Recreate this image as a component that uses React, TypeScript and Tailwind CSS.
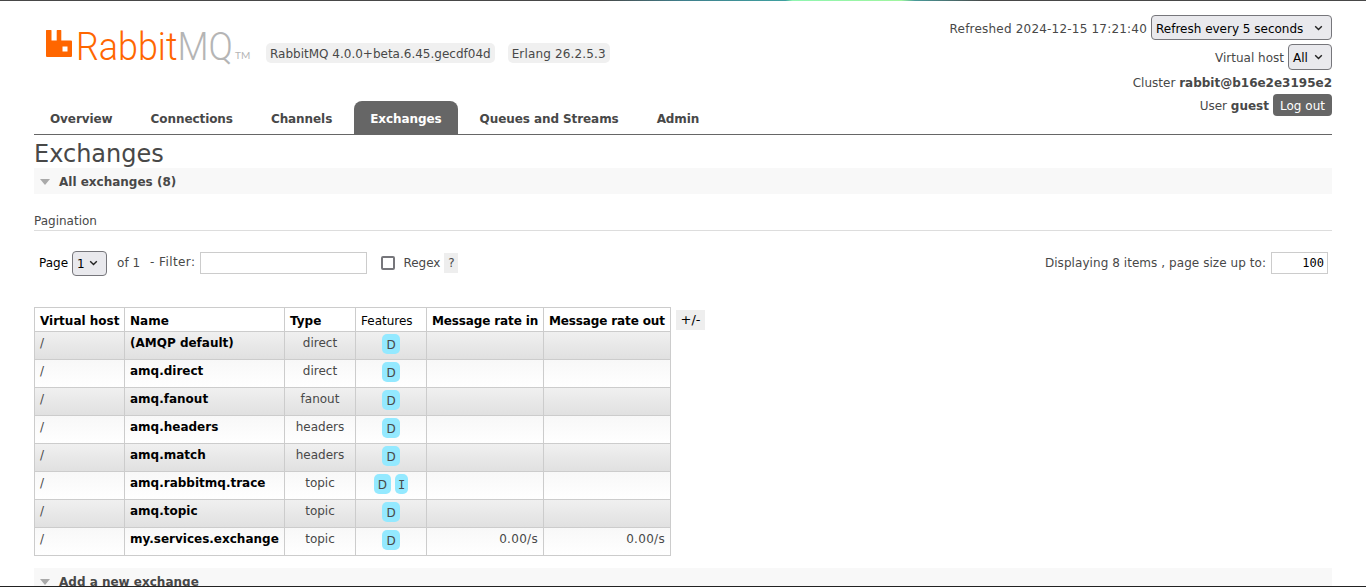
import React from "react";

const tabs = ["Overview", "Connections", "Channels", "Exchanges", "Queues and Streams", "Admin"];

const rows = [
  { name: "(AMQP default)", type: "direct", features: ["D"] },
  { name: "amq.direct", type: "direct", features: ["D"] },
  { name: "amq.fanout", type: "fanout", features: ["D"] },
  { name: "amq.headers", type: "headers", features: ["D"] },
  { name: "amq.match", type: "headers", features: ["D"] },
  { name: "amq.rabbitmq.trace", type: "topic", features: ["D", "I"] },
  { name: "amq.topic", type: "topic", features: ["D"] },
  { name: "my.services.exchange", type: "topic", features: ["D"], rateIn: "0.00/s", rateOut: "0.00/s" },
];

const Chevron = () => (
  <svg width="9" height="6" viewBox="0 0 9 6" className="absolute right-[8px] top-1/2 -translate-y-1/2">
    <path d="M1.2 1.2 L4.5 4.5 L7.8 1.2" fill="none" stroke="#222" strokeWidth="1.4" />
  </svg>
);

const Select = ({ label, className }: { label: string; className: string }) => (
  <div className={`relative rounded-[4px] border border-[#76767b] bg-[#e9e9ed] pl-[4px] text-[12px] text-black ${className}`}>
    {label}
    <Chevron />
  </div>
);

const Logo = () => (
  <div className="flex items-start w-[208px] h-[36px]">
    <svg width="26" height="27" viewBox="0 0 26 27" className="mt-[1px] shrink-0">
      <path
        fillRule="evenodd"
        fill="#ff6600"
        d="M0 0.5 Q0 0 0.5 0 H5 Q5.5 0 5.5 0.5 V10.5 H10.7 V0.5 Q10.7 0 11.2 0 H14.8 Q15.3 0 15.3 0.5 V10.5 H25 Q26 10.5 26 11.5 V26 Q26 27 25 27 H1 Q0 27 0 26 Z M16.5 16.5 V21.5 H21.5 V16.5 Z"
      />
    </svg>
    <div className="w-[155px] ml-[4px] shrink-0">
      <span className="font-['Roboto',sans-serif] font-light text-[39px] leading-[36px] inline-block origin-left scale-x-[0.92] whitespace-nowrap">
        <span className="text-[#ff6600]">Rabbit</span>
        <span className="text-[#b5b5b5]">MQ</span>
      </span>
    </div>
    <span className="ml-[4px] mt-[22px] text-[10px] leading-[9px] font-['Lato',sans-serif] text-[#b5b5b5]">TM</span>
  </div>
);

const Th = ({ children, plain, className = "" }: { children: React.ReactNode; plain?: boolean; className?: string }) => (
  <th className={`border border-[#cccccc] h-[24px] px-[5px] pt-[3px] align-middle text-left whitespace-nowrap text-black ${plain ? "font-normal" : "font-bold"} ${className}`}>
    {children}
  </th>
);

const Td = ({ children, className = "" }: { children?: React.ReactNode; className?: string }) => (
  <td className={`border border-[#cccccc] h-[28px] px-[5px] pb-[5px] align-middle whitespace-nowrap ${className}`}>{children}</td>
);

export default function App() {
  return (
    <div className="relative h-[587px] overflow-hidden bg-white font-['DejaVu_Sans',sans-serif] text-[12px] leading-[16px] text-[#484848]">
      <div className="h-px bg-[linear-gradient(90deg,#484848_0%,#484848_44%,#3f7f8c_50%,#3fa0a0_57.5%,#8ff5b0_58%,#9ff59f_66%,#4a9a9a_67%,#484848_72%,#484848_100%)]" />

      <div className="mx-[34px]">
        <div className="flex justify-between h-[100px]">
          <div className="flex items-start pt-[28px] pl-[12px]">
            <Logo />
            <div className="flex gap-[13px] ml-[12px] mt-[14px]">
              <span className="rounded-[5px] bg-[#f0f0f0] px-[4px] pt-[3px] pb-[1px] whitespace-nowrap">RabbitMQ 4.0.0+beta.6.45.gecdf04d</span>
              <span className="rounded-[5px] bg-[#f0f0f0] px-[4px] pt-[3px] pb-[1px] tracking-[0.15px] whitespace-nowrap">Erlang 26.2.5.3</span>
            </div>
          </div>
          <div className="flex flex-col items-end pt-[14px]">
            <div className="flex items-center gap-[4px] h-[25px]">
              <span className="tracking-[0.2px] pt-[2px]">Refreshed 2024-12-15 17:21:40</span>
              <Select label="Refresh every 5 seconds" className="w-[181px] h-[25px] leading-[27px]" />
            </div>
            <div className="flex items-center gap-[4px] h-[26px] mt-[4px]">
              <span className="pt-[2px]">Virtual host</span>
              <Select label="All" className="w-[44px] h-[26px] leading-[26px]" />
            </div>
            <div className="mt-[5px] h-[16px]">
              Cluster <b>rabbit@b16e2e3195e2</b>
            </div>
            <div className="flex items-center gap-[4px] mt-[3px] h-[22px]">
              <span className="pt-[2px]">
                User <b>guest</b>
              </span>
              <span className="rounded-[4px] bg-[#666666] w-[59px] text-center h-[22px] leading-[24px] text-white">Log out</span>
            </div>
          </div>
        </div>

        <div className="flex h-[34px] border-b border-[#666666] font-bold tracking-[-0.08px]">
          {tabs.map((t) => (
            <div
              key={t}
              className={`h-[33px] pt-[10px] rounded-t-[8px] px-[16px] mr-[6px] ${t === "Exchanges" ? "bg-[#666666] text-white" : "text-[#484848]"}`}
            >
              {t}
            </div>
          ))}
        </div>

        <h1 className="text-[24px] leading-[32px] mt-[3px] h-[30px] font-normal">Exchanges</h1>

        <div className="flex items-center h-[26px] pt-[1px] bg-[#f8f8f8] font-bold">
          <span className="ml-[6px] mr-[9px] w-0 h-0 border-x-[5.5px] border-x-transparent border-t-[6px] border-t-[#aaaaaa]" />
          All exchanges (8)
        </div>

        <div className="mt-[19px] h-[18px] border-b border-[#dddddd] leading-[17px]">Pagination</div>

        <div className="flex justify-between items-center mt-[19px] h-[26px]">
          <div className="flex items-center pl-[5px]">
            <span className="text-black">Page</span>
            <Select label="1" className="w-[35px] h-[25px] leading-[25px] ml-[4px]" />
            <span className="ml-[10px]">of 1</span>
            <span className="ml-[10px] -mt-[2px] tracking-[0.4px]">- Filter:</span>
            <div className="ml-[5px] w-[167px] h-[22px] border border-[#cccccc] bg-white" />
            <span className="ml-[14px] w-[14px] h-[14px] rounded-[2px] border-2 border-[#76767b] bg-white" />
            <span className="ml-[8px]">Regex</span>
            <span className="ml-[4px] w-[14px] h-[20px] bg-[#eeeeee] text-center leading-[20px]">?</span>
          </div>
          <div className="flex items-center pr-[4px]">
            <span className="tracking-[0.06px]">Displaying 8 items , page size up to:</span>
            <div className="ml-[5px] w-[57px] h-[22px] border border-[#cccccc] bg-white text-right pr-[3px] leading-[20px] font-['DejaVu_Sans_Mono',monospace] text-black">
              100
            </div>
          </div>
        </div>

        <div className="flex items-start mt-[31px]">
          <table className="border-collapse table-fixed w-[637px]">
            <colgroup>
              <col className="w-[90px]" />
              <col className="w-[160px]" />
              <col className="w-[71px]" />
              <col className="w-[71px]" />
              <col className="w-[117px]" />
              <col className="w-[127px]" />
            </colgroup>
            <thead>
              <tr>
                <Th>Virtual host</Th>
                <Th>Name</Th>
                <Th>Type</Th>
                <Th plain>Features</Th>
                <Th className="tracking-[-0.13px]">Message rate in</Th>
                <Th className="tracking-[-0.13px]">Message rate out</Th>
              </tr>
            </thead>
            <tbody>
              {rows.map((r, i) => (
                <tr
                  key={r.name}
                  className={i % 2 === 0 ? "bg-[linear-gradient(#f0f0f0,#e0e0e0)]" : "bg-[linear-gradient(#f8f8f8,#ffffff)]"}
                >
                  <Td>/</Td>
                  <Td className="font-bold text-black">{r.name}</Td>
                  <Td className="text-center">{r.type}</Td>
                  <Td className="text-center">
                    <div className="flex justify-center gap-[4px] mt-[2px]">
                      {r.features.map((f) =>
                        f === "I" ? (
                          <span key={f} className="rounded-[5px] bg-[#94e9ff] px-[3px] h-[20px] leading-[22px] font-['DejaVu_Sans_Mono',monospace]">
                            {f}
                          </span>
                        ) : (
                          <span key={f} className="rounded-[5px] bg-[#94e9ff] px-[4px] h-[20px] leading-[22px]">
                            {f}
                          </span>
                        ),
                      )}
                    </div>
                  </Td>
                  <Td className="text-right tracking-[0.3px]">{r.rateIn}</Td>
                  <Td className="text-right tracking-[0.3px]">{r.rateOut}</Td>
                </tr>
              ))}
            </tbody>
          </table>
          <span className="ml-[5px] mt-[3px] h-[20px] w-[29px] text-center bg-[#eeeeee] leading-[20px] text-[13px] text-black">+/-</span>
        </div>

        <div className="flex items-center h-[26px] pt-[1px] mt-[12px] bg-[#f8f8f8] font-bold">
          <span className="ml-[6px] mr-[9px] w-0 h-0 border-x-[5.5px] border-x-transparent border-t-[6px] border-t-[#aaaaaa]" />
          Add a new exchange
        </div>
      </div>

      <div className="absolute inset-x-0 bottom-0 h-px bg-[#222222]" />
    </div>
  );
}
